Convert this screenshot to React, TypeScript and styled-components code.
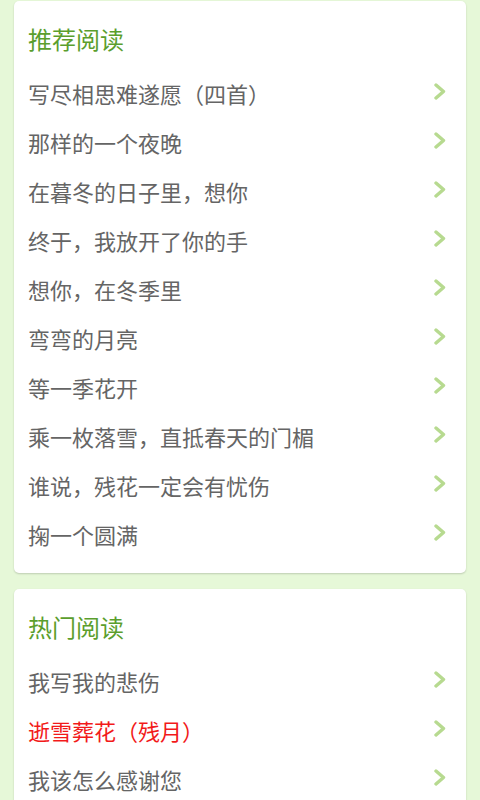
import React from 'react';
import styled, { createGlobalStyle } from 'styled-components';

const GlobalStyle = createGlobalStyle`
  html, body {
    margin: 0;
    padding: 0;
    background: #e6f8d8;
    font-family: "Noto Sans CJK SC", "Noto Sans", sans-serif;
  }
`;

interface Article {
  title: string;
  hot?: boolean;
}

const recommended: Article[] = [
  { title: '写尽相思难遂愿（四首）' },
  { title: '那样的一个夜晚' },
  { title: '在暮冬的日子里，想你' },
  { title: '终于，我放开了你的手' },
  { title: '想你，在冬季里' },
  { title: '弯弯的月亮' },
  { title: '等一季花开' },
  { title: '乘一枚落雪，直抵春天的门楣' },
  { title: '谁说，残花一定会有忧伤' },
  { title: '掬一个圆满' },
];

const popular: Article[] = [
  { title: '我写我的悲伤' },
  { title: '逝雪葬花（残月）', hot: true },
  { title: '我该怎么感谢您' },
];

const Page = styled.div`
  display: flex;
  flex-direction: column;
  gap: 16px;
  padding-top: 1px;
  height: 800px;
  overflow: hidden;
`;

const Card = styled.section`
  margin: 0 14px;
  padding: 14px 20px 15px 14px;
  background: #fff;
  border-radius: 5px;
  box-shadow: 0 1px 2px rgba(0, 0, 0, 0.18);
`;

const Heading = styled.h2`
  margin: 0 0 5px;
  height: 48px;
  line-height: 48px;
  font-size: 24px;
  font-weight: normal;
  color: #5b9e2d;
`;

const List = styled.ul`
  list-style: none;
  margin: 0;
  padding: 0;
`;

const Row = styled.li<{ $hot?: boolean }>`
  display: flex;
  align-items: center;
  justify-content: space-between;
  height: 49px;
  font-size: 22px;
  color: ${(p) => (p.$hot ? '#f21a1a' : '#656565')};
`;

const Chevron = styled.svg`
  width: 12px;
  height: 17px;
  margin-top: -3px;
  flex-shrink: 0;
`;

function Arrow() {
  return (
    <Chevron viewBox="0 0 12 17">
      <path
        d="M2 2 L9.5 8.5 L2 15"
        fill="none"
        stroke="#b7da90"
        strokeWidth="3.4"
        strokeLinecap="round"
        strokeLinejoin="round"
      />
    </Chevron>
  );
}

function ArticleCard({ heading, items }: { heading: string; items: Article[] }) {
  return (
    <Card>
      <Heading>{heading}</Heading>
      <List>
        {items.map((a) => (
          <Row key={a.title} $hot={a.hot}>
            <span>{a.title}</span>
            <Arrow />
          </Row>
        ))}
      </List>
    </Card>
  );
}

export default function App() {
  return (
    <Page>
      <GlobalStyle />
      <ArticleCard heading="推荐阅读" items={recommended} />
      <ArticleCard heading="热门阅读" items={popular} />
    </Page>
  );
}
